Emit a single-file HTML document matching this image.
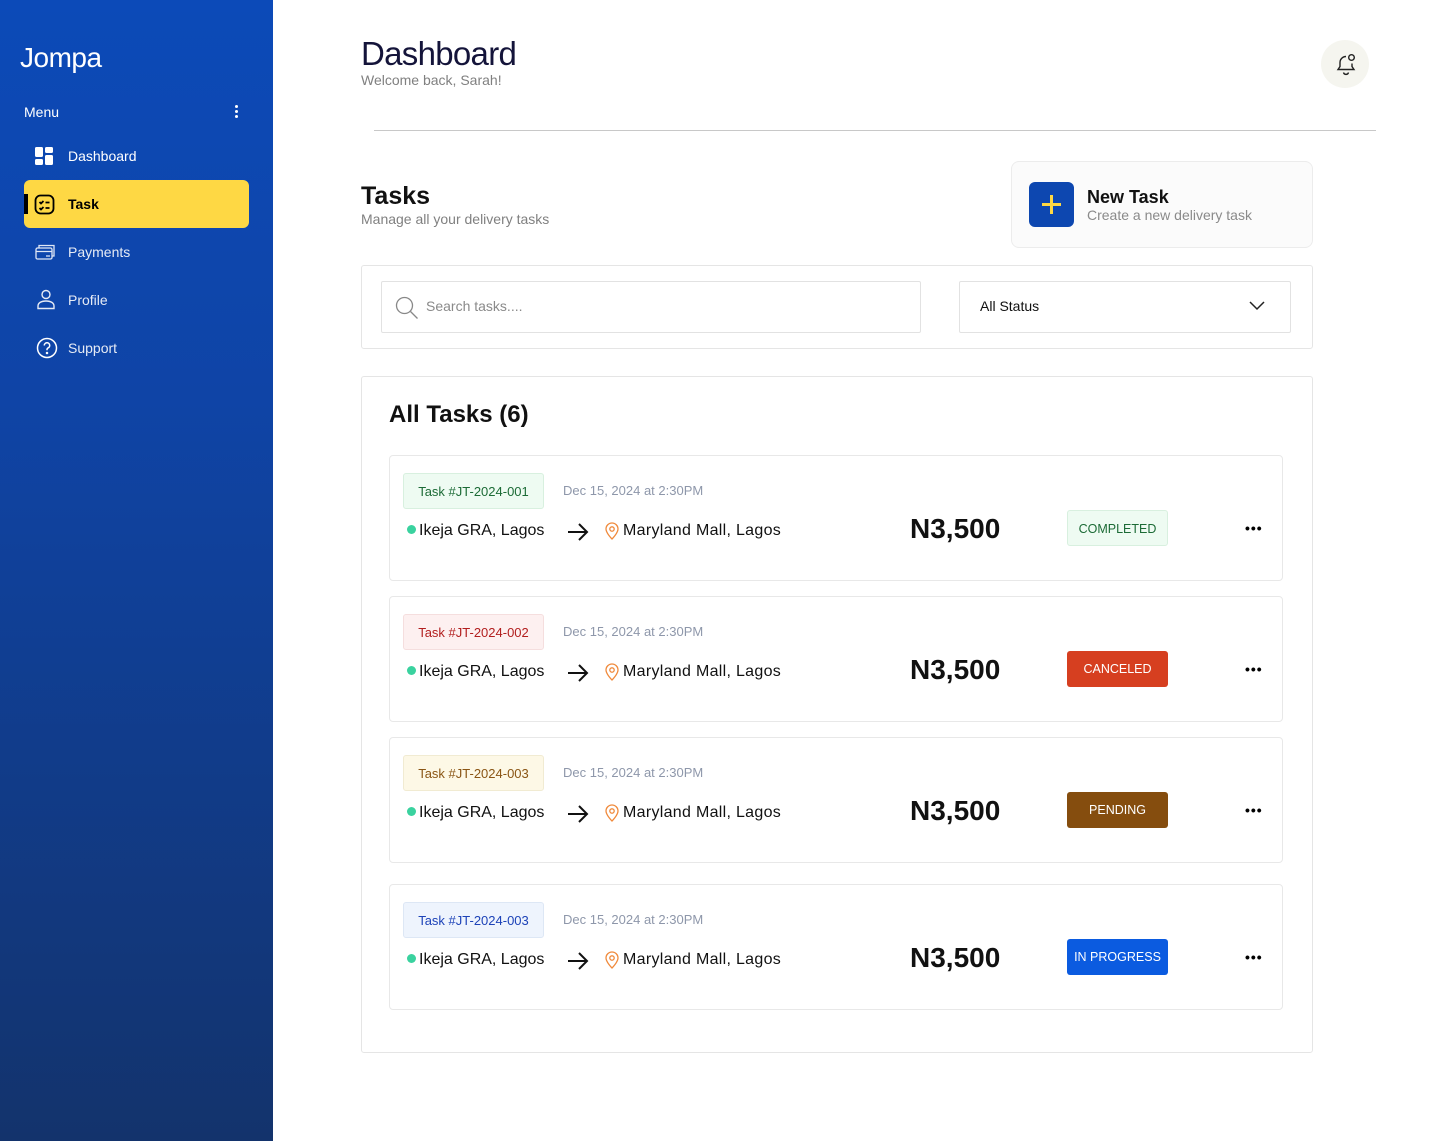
<!DOCTYPE html>
<html><head><meta charset="utf-8"><style>
*{margin:0;padding:0;box-sizing:border-box}
body{width:1440px;height:1141px;position:relative;font-family:"Liberation Sans",Arial,sans-serif;background:#fff;overflow:hidden;color:#000}
.a{position:absolute}
.side{left:0;top:0;width:273px;height:1141px;background:linear-gradient(180deg,#0c4ab8 0%,#0f44a6 35%,#13336c 100%)}
.nav{position:absolute;left:68px;font-size:14px;color:#fff}
.ic{position:absolute}
.card{position:absolute;left:389px;width:894px;height:126px;border:1px solid #e8e8e8;border-radius:4px;background:#fff}
.tag{position:absolute;left:13px;top:17px;width:141px;height:36px;border-radius:3px;font-size:13px;line-height:36px;text-align:center}
.date{position:absolute;left:173px;top:27px;font-size:13px;color:#8e97aa}
.route{position:absolute;left:17px;top:64px;font-size:16px;color:#111;white-space:nowrap;line-height:22px}
.dot{display:inline-block;width:9px;height:9px;border-radius:50%;background:#3ad29f;margin-right:3px;vertical-align:1px}
.price{position:absolute;left:520px;top:57px;font-size:28px;font-weight:bold;color:#111}
.st{position:absolute;left:677px;top:54px;width:101px;height:36px;border-radius:3px;font-size:12.5px;line-height:36px;text-align:center}
.more{position:absolute;left:855px;top:64px;font-size:14px;font-weight:bold;letter-spacing:1px}
</style></head><body>
<div class="a side">
 <div class="a" style="left:20px;top:42px;font-size:28px;color:#fff;letter-spacing:-0.5px">Jompa</div>
 <div class="a" style="left:24px;top:104px;font-size:14px;color:#fff">Menu</div>
 <div class="a" style="left:235px;top:105px;width:3px;height:3px;background:#fff;border-radius:50%;box-shadow:0 5px 0 #fff,0 10px 0 #fff"></div>
 <svg class="ic" style="left:35px;top:147px" width="18" height="18"><rect x="0" y="0" width="8" height="10" rx="1.5" fill="#fff"/><rect x="10" y="0" width="8" height="6" rx="1.5" fill="#fff"/><rect x="0" y="12" width="8" height="6" rx="1.5" fill="#fff"/><rect x="10" y="8" width="8" height="10" rx="1.5" fill="#fff"/></svg>
 <div class="nav" style="top:148px">Dashboard</div>
 <div class="a" style="left:24px;top:180px;width:225px;height:48px;background:#fed844;border-radius:6px"></div>
 <div class="a" style="left:24px;top:194px;width:4px;height:20px;background:#000"></div>
 <svg class="ic" style="left:34px;top:194px" width="21" height="21" fill="none" stroke="#000" stroke-width="1.8"><rect x="1.5" y="1.5" width="18" height="18" rx="5"/><path d="M5.5 8l1.5 1.5 2.5-2.5M5.5 14l1.5 1.5 2.5-2.5M11.5 8.5h4M11.5 14h4"/></svg>
 <div class="nav" style="top:196px;color:#000;font-weight:bold">Task</div>
 <svg class="ic" style="left:35px;top:243px" width="21" height="18" fill="none" stroke="#dfe6f5" stroke-width="1.3"><rect x="1" y="5" width="16" height="11" rx="1.5"/><path d="M4 5V2.5h15V13h-2M1 8.5h16M11 13h4"/></svg>
 <div class="nav" style="top:244px;color:#e6ebf5">Payments</div>
 <svg class="ic" style="left:36px;top:289px" width="20" height="21" fill="none" stroke="#e6ebf5" stroke-width="1.4"><circle cx="10" cy="5.5" r="4"/><path d="M2 19.5v-2.5c0-3 3-5 8-5s8 2 8 5v2.5z"/></svg>
 <div class="nav" style="top:292px;color:#e6ebf5">Profile</div>
 <svg class="ic" style="left:36px;top:337px" width="22" height="22" fill="none" stroke="#fff" stroke-width="1.5"><circle cx="11" cy="11" r="9.5"/><path d="M8.3 8.5a2.7 2.7 0 1 1 3.6 2.5c-.6.3-.9.8-.9 1.5v.8"/><circle cx="11" cy="16" r=".5" fill="#fff"/></svg>
 <div class="nav" style="top:340px;color:#e6ebf5">Support</div>
</div>

<div class="a" style="left:361px;top:35px;font-size:33px;color:#14143a;letter-spacing:-0.7px">Dashboard</div>
<div class="a" style="left:361px;top:72px;font-size:14px;color:#808080">Welcome back, Sarah!</div>
<div class="a" style="left:1321px;top:40px;width:48px;height:48px;border-radius:50%;background:#f5f5ef"></div>
<svg class="a" style="left:1334px;top:52px" width="24" height="24" fill="none" stroke="#222" stroke-width="1.4"><path d="M12 4.5a6 6 0 0 0-6 6v4l-2 3h16l-2-3v-3M9.5 20.5a2.6 2.6 0 0 0 5 0"/><circle cx="17.5" cy="5.5" r="2.8"/></svg>
<div class="a" style="left:374px;top:130px;width:1002px;height:1px;background:#c8c8c8"></div>

<div class="a" style="left:361px;top:182px;font-size:25px;font-weight:bold;color:#111">Tasks</div>
<div class="a" style="left:361px;top:211px;font-size:14px;color:#808080">Manage all your delivery tasks</div>
<div class="a" style="left:1011px;top:161px;width:302px;height:87px;border:1px solid #ececec;border-radius:8px;background:#fbfbfb"></div>
<div class="a" style="left:1029px;top:182px;width:45px;height:45px;border-radius:6px;background:#0d47b0"></div>
<div class="a" style="left:1042px;top:203px;width:19px;height:3px;background:#fed844"></div>
<div class="a" style="left:1050px;top:195px;width:3px;height:19px;background:#fed844"></div>
<div class="a" style="left:1087px;top:187px;font-size:18px;font-weight:bold;color:#111">New Task</div>
<div class="a" style="left:1087px;top:207px;font-size:14px;color:#8a8a8a">Create a new delivery task</div>

<div class="a" style="left:361px;top:265px;width:952px;height:84px;border:1px solid #e5e5e5;border-radius:3px"></div>
<div class="a" style="left:381px;top:281px;width:540px;height:52px;border:1px solid #e2e2e2;border-radius:2px"></div>
<svg class="a" style="left:394px;top:295px" width="26" height="26" fill="none" stroke="#888" stroke-width="1.3"><circle cx="10.5" cy="10.5" r="8"/><path d="M16.5 16.5l7 7"/></svg>
<div class="a" style="left:426px;top:298px;font-size:14px;color:#8a8a8a">Search tasks....</div>
<div class="a" style="left:959px;top:281px;width:332px;height:52px;border:1px solid #e2e2e2;border-radius:2px"></div>
<div class="a" style="left:980px;top:298px;font-size:14px;color:#111">All Status</div>
<svg class="a" style="left:1248px;top:300px" width="18" height="12" fill="none" stroke="#222" stroke-width="1.5"><path d="M2 2l7 7 7-7"/></svg>

<div class="a" style="left:361px;top:376px;width:952px;height:677px;border:1px solid #e5e5e5;border-radius:3px"></div>
<div class="a" style="left:389px;top:401px;font-size:24px;font-weight:bold;color:#111">All Tasks (6)</div>

<div class="card" style="top:455px">
 <div class="tag" style="background:#eefbf2;border:1px solid #d8f0df;color:#1c6b36">Task #JT-2024-001</div>
 <div class="date">Dec 15, 2024 at 2:30PM</div>
 <div class="route"><span class="dot"></span>Ikeja GRA, Lagos</div>
 <svg class="a" style="left:177px;top:66px" width="22" height="20" fill="none" stroke="#111" stroke-width="2"><path d="M1 10h19M12 2l8 8-8 8"/></svg>
 <svg class="a" style="left:215px;top:66px" width="14" height="18" fill="none" stroke="#f08a3c" stroke-width="1.3"><path d="M7 17s-6-6-6-10a6 6 0 0 1 12 0c0 4-6 10-6 10z"/><circle cx="7" cy="7" r="2.2"/></svg>
 <div class="route" style="left:233px;letter-spacing:0.3px">Maryland Mall, Lagos</div>
 <div class="price">N3,500</div>
 <div class="st" style="background:#eefbf2;border:1px solid #d8f0df;color:#1c6b36">COMPLETED</div>
 <div class="more">•••</div>
</div>
<div class="card" style="top:596px">
 <div class="tag" style="background:#fdf0f0;border:1px solid #f5dede;color:#b21e1e">Task #JT-2024-002</div>
 <div class="date">Dec 15, 2024 at 2:30PM</div>
 <div class="route"><span class="dot"></span>Ikeja GRA, Lagos</div>
 <svg class="a" style="left:177px;top:66px" width="22" height="20" fill="none" stroke="#111" stroke-width="2"><path d="M1 10h19M12 2l8 8-8 8"/></svg>
 <svg class="a" style="left:215px;top:66px" width="14" height="18" fill="none" stroke="#f08a3c" stroke-width="1.3"><path d="M7 17s-6-6-6-10a6 6 0 0 1 12 0c0 4-6 10-6 10z"/><circle cx="7" cy="7" r="2.2"/></svg>
 <div class="route" style="left:233px;letter-spacing:0.3px">Maryland Mall, Lagos</div>
 <div class="price">N3,500</div>
 <div class="st" style="background:#d63f20;color:#fff">CANCELED</div>
 <div class="more">•••</div>
</div>
<div class="card" style="top:737px">
 <div class="tag" style="background:#fdf8e6;border:1px solid #f1ebd2;color:#8a5514">Task #JT-2024-003</div>
 <div class="date">Dec 15, 2024 at 2:30PM</div>
 <div class="route"><span class="dot"></span>Ikeja GRA, Lagos</div>
 <svg class="a" style="left:177px;top:66px" width="22" height="20" fill="none" stroke="#111" stroke-width="2"><path d="M1 10h19M12 2l8 8-8 8"/></svg>
 <svg class="a" style="left:215px;top:66px" width="14" height="18" fill="none" stroke="#f08a3c" stroke-width="1.3"><path d="M7 17s-6-6-6-10a6 6 0 0 1 12 0c0 4-6 10-6 10z"/><circle cx="7" cy="7" r="2.2"/></svg>
 <div class="route" style="left:233px;letter-spacing:0.3px">Maryland Mall, Lagos</div>
 <div class="price">N3,500</div>
 <div class="st" style="background:#854d0e;color:#fff">PENDING</div>
 <div class="more">•••</div>
</div>
<div class="card" style="top:884px">
 <div class="tag" style="background:#eef4fd;border:1px solid #dde7f5;color:#1d43b8">Task #JT-2024-003</div>
 <div class="date">Dec 15, 2024 at 2:30PM</div>
 <div class="route"><span class="dot"></span>Ikeja GRA, Lagos</div>
 <svg class="a" style="left:177px;top:66px" width="22" height="20" fill="none" stroke="#111" stroke-width="2"><path d="M1 10h19M12 2l8 8-8 8"/></svg>
 <svg class="a" style="left:215px;top:66px" width="14" height="18" fill="none" stroke="#f08a3c" stroke-width="1.3"><path d="M7 17s-6-6-6-10a6 6 0 0 1 12 0c0 4-6 10-6 10z"/><circle cx="7" cy="7" r="2.2"/></svg>
 <div class="route" style="left:233px;letter-spacing:0.3px">Maryland Mall, Lagos</div>
 <div class="price">N3,500</div>
 <div class="st" style="background:#0b5be0;color:#fff">IN PROGRESS</div>
 <div class="more">•••</div>
</div>
</body></html>
